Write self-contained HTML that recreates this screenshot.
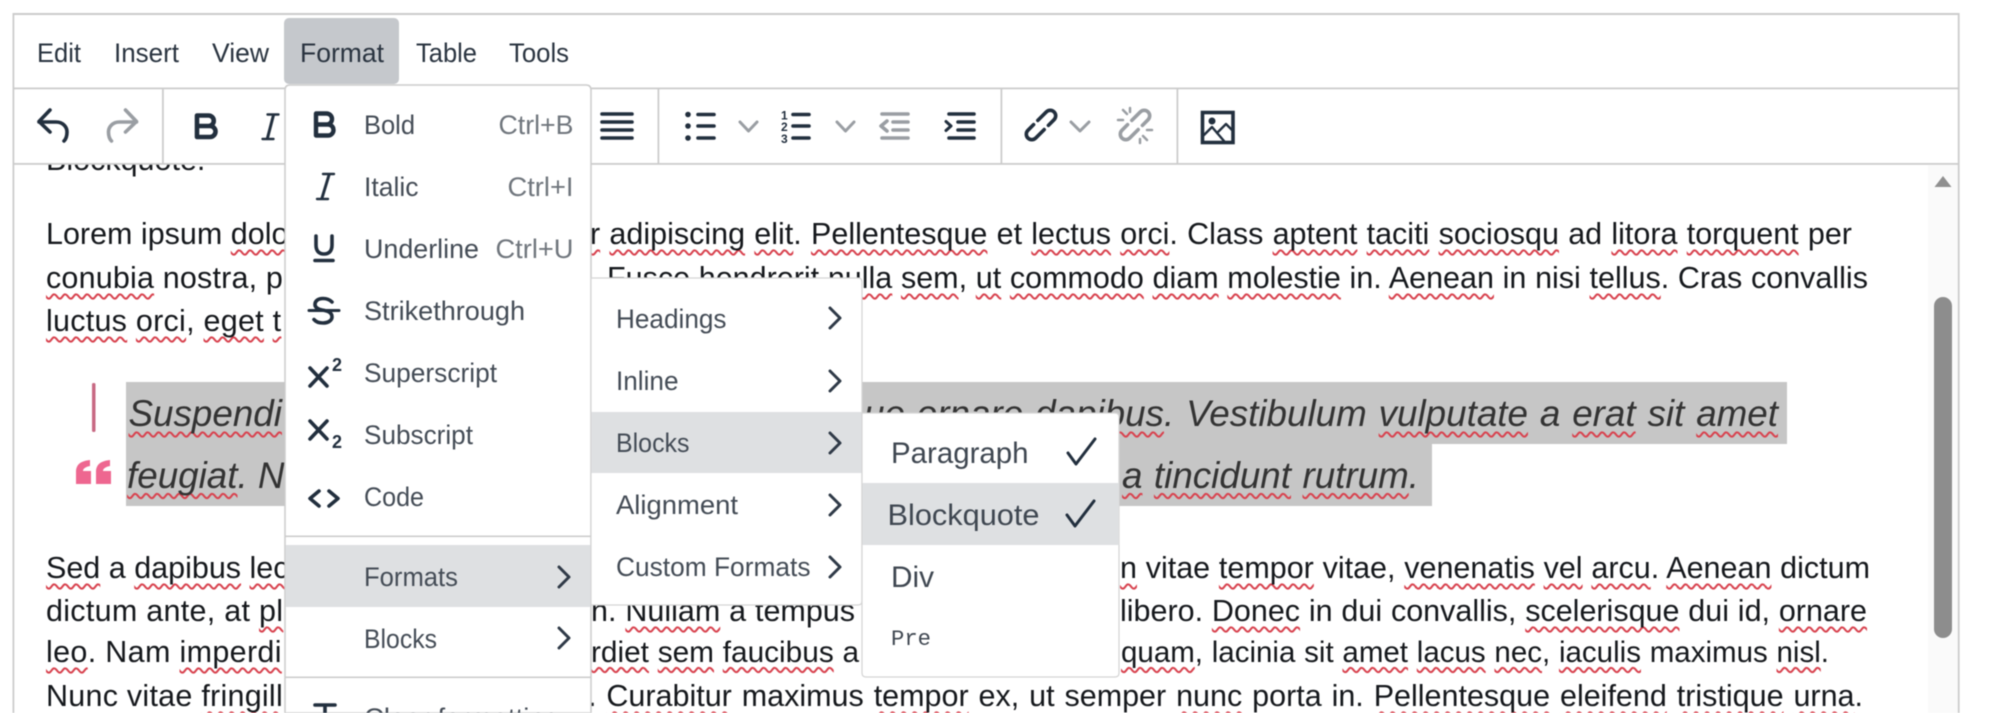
<!DOCTYPE html>
<html lang="en">
<head>
<meta charset="utf-8">
<title>Editor format menu</title>
<style>
html,body{margin:0;padding:0;background:#fff;width:2000px;height:713px;overflow:hidden}
#w{position:relative;width:2000px;height:713px;overflow:hidden;background:#fff;filter:blur(.45px)}
svg{display:block;position:absolute;left:0;top:0}
text{font-family:"Liberation Sans",Arial,sans-serif;white-space:pre}
.l,.k{position:absolute;white-space:nowrap;line-height:44px;height:44px;font-family:"Liberation Sans",Arial,sans-serif;color:#15181c;font-size:30.5px}
.j{text-align:justify;text-align-last:justify}
.k{font-size:36.8px;font-style:italic;color:#333}
.sel{position:absolute;background:#c6c6c6}
.t{position:absolute;background:#fafafa}
u{text-decoration:underline wavy #d8434f;text-decoration-thickness:1.6px;text-underline-offset:5px;text-decoration-skip-ink:none}
.mb{font-size:27px;fill:#2a3440}
.m{font-size:27px;fill:#444c56}
.s{font-size:27px;fill:#70767d}
.ic{fill:none;stroke:#222f3e;stroke-width:3.6;stroke-linecap:round;stroke-linejoin:round}
.gr{stroke:#9a9ea3}
.ch{fill:none;stroke:#9a9ea3;stroke-width:3;stroke-linecap:round;stroke-linejoin:round}
.cv{fill:none;stroke:#2f3a47;stroke-width:3;stroke-linecap:round;stroke-linejoin:round}
</style>
</head>
<body>
<div id="w">
<div class="t" style="left:1928px;top:165px;width:30px;height:548px"></div>

<div class="l" style="left:46px;top:138px">Blockquote.</div>

<div class="l" style="left:46px;top:212px">Lorem ipsum <u>dolo</u></div>
<div class="l j" style="left:590px;top:212px;width:1262px"><u>r</u> <u>adipiscing</u> <u>elit</u>. <u>Pellentesque</u> et <u>lectus</u> <u>orci</u>. Class <u>aptent</u> <u>taciti</u> <u>sociosqu</u> ad <u>litora</u> <u>torquent</u> per</div>

<div class="l" style="left:46px;top:256px;letter-spacing:.18px"><u>conubia</u> nostra, p</div>
<div class="l j" style="left:607px;top:256px;width:1261px">Fusce <u>hendrerit</u> <u>nulla</u> <u>sem</u>, <u>ut</u> <u>commodo</u> <u>diam</u> <u>molestie</u> in. <u>Aenean</u> in nisi <u>tellus</u>. Cras convallis</div>

<div class="l" style="left:46px;top:299px;letter-spacing:.25px"><u>luctus</u> <u>orci</u>, <u>eget</u> <u>t</u></div>

<div class="sel" style="left:126px;top:382px;width:1661px;height:61.500px"></div>
<div class="sel" style="left:126px;top:443px;width:1306px;height:63px"></div>
<div class="k" style="left:128.500px;top:392px"><u>Suspendi</u></div>
<div class="k j" style="left:864px;top:392px;width:914px">ue ornare <u>dapibus</u>. Vestibulum <u>vulputate</u> a <u>erat</u> sit <u>amet</u></div>
<div class="k" style="left:127px;top:453.500px"><u>feugiat</u>. N</div>
<div class="k j" style="left:1122px;top:453.500px;width:297px"><u>a</u> <u>tincidunt</u> <u>rutrum</u>.</div>

<div class="l" style="left:46px;top:546px"><u>Sed</u> a <u>dapibus</u> <u>lec</u></div>
<div class="l j" style="left:1120px;top:546px;width:750px"><u>n</u> vitae <u>tempor</u> vitae, <u>venenatis</u> <u>vel</u> <u>arcu</u>. <u>Aenean</u> dictum</div>

<div class="l" style="left:46px;top:589px;letter-spacing:.28px">dictum ante, at <u>pl</u></div>
<div class="l j" style="left:591px;top:589px;width:264px">n. <u>Nullam</u> a tempus</div>
<div class="l j" style="left:1120px;top:589px;width:747px">libero. <u>Donec</u> in dui convallis, <u>scelerisque</u> dui id, <u>ornare</u></div>

<div class="l" style="left:46px;top:630px;letter-spacing:.33px"><u>leo</u>. Nam <u>imperdi</u></div>
<div class="l j" style="left:591px;top:630.500px;width:268px;font-size:29.800px"><u>rdiet</u> <u>sem</u> <u>faucibus</u> a</div>
<div class="l j" style="left:1121px;top:630.500px;width:708px;font-size:29.500px"><u>quam</u>, lacinia sit <u>amet</u> <u>lacus</u> <u>nec</u>, <u>iaculis</u> maximus <u>nisl</u>.</div>

<div class="l" style="left:46px;top:674px;letter-spacing:.25px">Nunc vitae <u>fringill</u></div>
<div class="l j" style="left:588px;top:674px;width:1275px">. <u>Curabitur</u> maximus <u>tempor</u> ex, ut semper <u>nunc</u> porta in. <u>Pellentesque</u> <u>eleifend</u> <u>tristique</u> <u>urna</u>.</div>

<svg width="2000" height="713" viewBox="0 0 2000 713" xmlns="http://www.w3.org/2000/svg">
<!-- scrollbar -->
<path d="M1934.500 187L1943 176L1951.500 187Z" fill="#8f8f8f"/>
<rect x="1934" y="297" width="18" height="341" rx="9" fill="#8d8d8d"/>

<!-- blockquote marks -->
<rect x="92" y="383" width="3.500" height="49" rx="1.500" fill="#c86a84"/>
<path d="M76 484V472C76 465 80 461 90 460V466C85 467 83 469 83 471H91V484Z" fill="#ee6790"/>
<path d="M96 484V472C96 465 100 461 110 460V466C105 467 103 469 103 471H111V484Z" fill="#ee6790"/>

<!-- header -->
<rect x="13" y="13" width="1946" height="151" fill="#fff"/>
<rect x="13" y="13" width="1946" height="2" fill="#ccc"/>
<rect x="13" y="87.500" width="1946" height="1.800" fill="#ccc"/>
<rect x="13" y="163" width="1946" height="1.800" fill="#ccc"/>
<rect x="12.500" y="13" width="1.800" height="700" fill="#ccc"/>
<rect x="1957.800" y="13" width="1.800" height="700" fill="#ccc"/>
<rect x="162" y="88" width="1.800" height="76" fill="#ccc"/>
<rect x="657.500" y="88" width="1.800" height="76" fill="#ccc"/>
<rect x="1000.500" y="88" width="1.800" height="76" fill="#ccc"/>
<rect x="1176.500" y="88" width="1.800" height="76" fill="#ccc"/>

<rect x="284" y="18" width="115" height="66" rx="5" fill="#c5c8cc"/>
<text class="mb" x="37" y="62" textLength="44" lengthAdjust="spacingAndGlyphs">Edit</text>
<text class="mb" x="114" y="62" textLength="65" lengthAdjust="spacingAndGlyphs">Insert</text>
<text class="mb" x="212" y="62" textLength="57" lengthAdjust="spacingAndGlyphs">View</text>
<text class="mb" x="300" y="62" textLength="84" lengthAdjust="spacingAndGlyphs">Format</text>
<text class="mb" x="416" y="62" textLength="61" lengthAdjust="spacingAndGlyphs">Table</text>
<text class="mb" x="509" y="62" textLength="60" lengthAdjust="spacingAndGlyphs">Tools</text>

<!-- toolbar icons -->
<path class="ic" d="M50 110L39 121.500L50 132M39 122H56C63 122 67 127 67 132C67 136 66 139 64 141"/>
<path class="ic gr" d="M125.500 110L136.500 121.500L125.500 132M136.500 122H119.500C112.500 122 108.500 127 108.500 132C108.500 136 109.500 139 111.500 141"/>
<path class="ic" style="stroke-width:4.600" d="M197 115.500V137H210A5.400 5.400 0 0 0 210 126H197M197 115.500H208.500A5.200 5.200 0 0 1 208.500 126"/>
<path class="ic" style="stroke-width:2.400" d="M267.500 114.500H278.500M262.500 139H273.500"/>
<path class="ic" style="stroke-width:3" d="M273.500 115L267.500 138"/>
<path class="ic" d="M602 114H632M602 122H632M602 130H632M602 138H632"/>

<circle cx="688" cy="114.500" r="2.800" fill="#222f3e"/><circle cx="688" cy="126" r="2.800" fill="#222f3e"/><circle cx="688" cy="138" r="2.800" fill="#222f3e"/>
<path class="ic" d="M698 114.500H714M698 126H714M698 138H714"/>
<path class="ch" d="M740 122L748.500 131L757 122"/>
<text x="781" y="119.500" font-size="12" font-weight="700" fill="#222f3e">1</text>
<text x="781" y="131" font-size="12" font-weight="700" fill="#222f3e">2</text>
<text x="781" y="143" font-size="12" font-weight="700" fill="#222f3e">3</text>
<path class="ic" d="M793 114.500H809M793 126H809M793 138H809"/>
<path class="ch" d="M837 122L845.500 131L854 122"/>

<path class="ic gr" d="M882 114H908M893 122H908M893 130H908M882 138H908M887 121L881 126L887 131"/>
<path class="ic" d="M949 114H974M958 122H974M958 130H974M949 138H974"/>
<path class="ic" style="stroke-width:3" d="M946 121.500L951 126L946 130.500"/>

<g transform="translate(1041 125) rotate(-45)">
<path class="ic" d="M1 -5.500H13A5.500 5.500 0 0 1 13 5.500H5M-1 5.500H-13A5.500 5.500 0 0 1 -13 -5.500H-5"/>
</g>
<path class="ch" d="M1071 122L1080 131L1089 122"/>
<g transform="translate(1135 125) rotate(-45)">
<path class="ic gr" d="M1 -5.500H13A5.500 5.500 0 0 1 13 5.500H5M-1 5.500H-13A5.500 5.500 0 0 1 -13 -5.500H-5"/>
</g>
<path class="ic gr" style="stroke-width:2.500" d="M1123 110L1127 114M1118 120H1123M1130 108V112M1147 140L1143 136M1152 130H1147M1140 143V139"/>

<rect x="1202.500" y="112.500" width="30.500" height="30" fill="none" stroke="#222f3e" stroke-width="3.600"/>
<circle cx="1212" cy="121" r="3.500" fill="#222f3e"/>
<path class="ic" style="stroke-width:2.400" d="M1204 135L1212 127L1224 141M1217 133L1226 124L1232 130"/>

<!-- main menu -->
<path d="M285 713V90Q285 85 290 85H586Q591 85 591 90V713Z" fill="#fff" stroke="#ccc" stroke-width="1.500"/>
<path class="ic" style="stroke-width:4.400" d="M316 113.500V135.500H328A5.500 5.500 0 0 0 328 124.500H316M316 113.500H326.500A5.500 5.500 0 0 1 326.500 124.500"/>
<text class="m" x="364" y="134" textLength="51" lengthAdjust="spacingAndGlyphs">Bold</text>
<text class="s" x="498.500" y="134" textLength="75" lengthAdjust="spacingAndGlyphs">Ctrl+B</text>

<path class="ic" style="stroke-width:2.400" d="M323 174H334M317 199H328"/>
<path class="ic" style="stroke-width:3" d="M329 175L322 198"/>
<text class="m" x="364" y="196" textLength="54.500" lengthAdjust="spacingAndGlyphs">Italic</text>
<text class="s" x="507.500" y="196" textLength="66" lengthAdjust="spacingAndGlyphs">Ctrl+I</text>

<path class="ic" d="M316 236V245C316 251 319 254 324 254C329 254 332 251 332 245V236M315 260.500H333"/>
<text class="m" x="364" y="258" textLength="115" lengthAdjust="spacingAndGlyphs">Underline</text>
<text class="s" x="495.500" y="258" textLength="78" lengthAdjust="spacingAndGlyphs">Ctrl+U</text>

<path class="ic" d="M332 302C329 299 326 298.500 323 298.500C318 298.500 315 301 315 304.500C315 307 317 309 322 310C329 311 332 313 332 317C332 320.500 328 323 323 323C319 323 316 322 314 319.500"/>
<path class="ic" style="stroke-width:3" d="M309 310.500H339"/>
<text class="m" x="364" y="320" textLength="161" lengthAdjust="spacingAndGlyphs">Strikethrough</text>

<path class="ic" d="M310 368L327 386M327 368L310 386"/>
<text x="332" y="371" font-size="18" font-weight="700" fill="#222f3e">2</text>
<text class="m" x="364" y="382" textLength="133" lengthAdjust="spacingAndGlyphs">Superscript</text>

<path class="ic" d="M310 421L327 439M327 421L310 439"/>
<text x="332" y="448" font-size="18" font-weight="700" fill="#222f3e">2</text>
<text class="m" x="364" y="444" textLength="109" lengthAdjust="spacingAndGlyphs">Subscript</text>

<path class="ic" d="M319 491L310 498.500L319 506M329 491L338 498.500L329 506"/>
<text class="m" x="364" y="506" textLength="60" lengthAdjust="spacingAndGlyphs">Code</text>

<rect x="285.500" y="535.500" width="305" height="1.600" fill="#ccc"/>
<rect x="285.500" y="545" width="305" height="62" fill="#dee0e2"/>
<text class="m" x="364" y="586" textLength="94" lengthAdjust="spacingAndGlyphs">Formats</text>
<path class="cv" d="M559 567L569 577L559 587"/>
<text class="m" x="364" y="648" textLength="73" lengthAdjust="spacingAndGlyphs">Blocks</text>
<path class="cv" d="M559 628L569 638L559 648"/>
<rect x="285.500" y="676.500" width="305" height="1.600" fill="#ccc"/>
<path class="ic" d="M315 705H335M325 705V725"/>
<text class="m" x="364" y="727" textLength="196" lengthAdjust="spacingAndGlyphs">Clear formatting</text>

<!-- submenu 1 -->
<path d="M591 278H858Q862 278 862 282V601Q862 605 858 605H591Z" fill="#fff" stroke="#d4d4d4" stroke-width="1.200"/>
<text class="m" x="616" y="328" textLength="110.500" lengthAdjust="spacingAndGlyphs">Headings</text>
<path class="cv" d="M830 308L840 318L830 328"/>
<text class="m" x="616" y="390" textLength="62.500" lengthAdjust="spacingAndGlyphs">Inline</text>
<path class="cv" d="M830 371L840 381L830 391"/>
<rect x="591.500" y="412" width="270.500" height="61" fill="#dee0e2"/>
<text class="m" x="616" y="452" textLength="73.500" lengthAdjust="spacingAndGlyphs">Blocks</text>
<path class="cv" d="M830 433L840 443L830 453"/>
<text class="m" x="616" y="514" textLength="122" lengthAdjust="spacingAndGlyphs">Alignment</text>
<path class="cv" d="M830 495L840 505L830 515"/>
<text class="m" x="616" y="576" textLength="194.500" lengthAdjust="spacingAndGlyphs">Custom Formats</text>
<path class="cv" d="M830 557L840 567L830 577"/>

<!-- submenu 2 -->
<path d="M862 413H1115Q1119 413 1119 417V673Q1119 677 1115 677H866Q862 677 862 673Z" fill="#fff" stroke="#d4d4d4" stroke-width="1.200"/>
<rect x="862.500" y="483" width="256.500" height="62" fill="#dee0e2"/>
<text x="891" y="463" font-size="29.500" textLength="137.500" lengthAdjust="spacingAndGlyphs" fill="#3f4751">Paragraph</text>
<path d="M1068 453L1076 464L1095 439" fill="none" stroke="#222f3e" stroke-width="3" stroke-linecap="round" stroke-linejoin="round"/>
<text x="887.500" y="525" font-size="29.500" textLength="152" lengthAdjust="spacingAndGlyphs" fill="#3f4751">Blockquote</text>
<path d="M1067 515L1075 526L1094 501" fill="none" stroke="#222f3e" stroke-width="3" stroke-linecap="round" stroke-linejoin="round"/>
<text x="891" y="587" font-size="30" textLength="43" lengthAdjust="spacingAndGlyphs" fill="#3f4751">Div</text>
<text x="891" y="645" font-size="22" textLength="40" lengthAdjust="spacingAndGlyphs" fill="#3f4751" style="font-family:'Liberation Mono',monospace">Pre</text>
</svg>
</div>
</body>
</html>
